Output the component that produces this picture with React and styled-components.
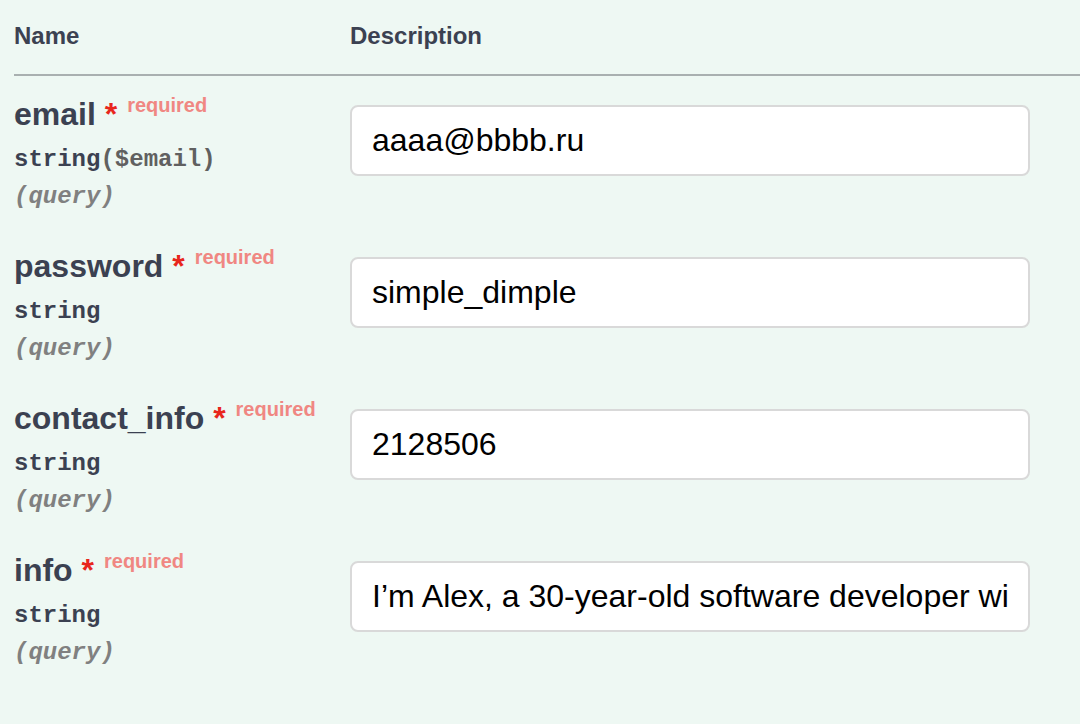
import React from 'react';
import styled, {createGlobalStyle} from 'styled-components';

const GlobalStyle = createGlobalStyle`
    html, body { margin:0; padding:0; background:#eef8f3; }
    body { font-family:"Liberation Sans", Arial, sans-serif; }
`;

const Page = styled.div`
    width:1080px;height:724px;overflow:hidden;background:#eef8f3;
    padding-left:14px;box-sizing:border-box;
`;

const Table = styled.div`
    display:grid;grid-template-columns:336px 1fr;
`;

const HeadCell = styled.div`
    font-size:24px;font-weight:700;color:#3b4151;
    padding:22px 0 24px;
    border-bottom:2px solid #a9b0b0;
`;

const NameCell = styled.div`
    padding:20px 0 18px;
`;

const DescCell = styled.div`
    padding:29px 0 0;
`;

const ParamName = styled.div`
    font-size:32px;font-weight:700;color:#3b4151;line-height:37px;
    white-space:nowrap;
    .star{color:#e8261c;}
    .req{
        font-size:20px;line-height:0;color:#f08782;position:relative;top:-13px;padding-left:10px;
    }
`;

const ParamType = styled.div`
    font-family:"Liberation Mono", "Courier New", monospace;
    font-size:24px;font-weight:700;color:#3b4151;padding:12px 0 9px;line-height:30px;
    .fmt{color:#606060;}
`;

const ParamIn = styled.div`
    font-family:"Liberation Mono", "Courier New", monospace;
    font-size:24px;font-weight:700;font-style:italic;color:#808080;line-height:26px;
`;

const Input = styled.input`
    box-sizing:border-box;width:680px;height:71px;
    border:2px solid #d9d9d9;border-radius:8px;background:#fff;
    padding:0 20px;font-family:"Liberation Sans", Arial, sans-serif;font-size:32px;color:#000;
    outline:none;
`;

const params = [
    {name:'email', type:'string', format:'($email)', value:'aaaa@bbbb.ru'},
    {name:'password', type:'string', value:'simple_dimple'},
    {name:'contact_info', type:'string', value:'2128506'},
    {name:'info', type:'string', value:'I’m Alex, a 30-year-old software developer with a passion for building things.'},
];

const App = () => (
    <Page>
        <GlobalStyle />
        <Table>
            <HeadCell>Name</HeadCell>
            <HeadCell>Description</HeadCell>
            {params.map((p) => (
                <React.Fragment key={p.name}>
                    <NameCell>
                        <ParamName>
                            {p.name}<span className="star">&nbsp;*</span><span className="req">required</span>
                        </ParamName>
                        <ParamType>
                            {p.type}{p.format && <span className="fmt">{p.format}</span>}
                        </ParamType>
                        <ParamIn>(query)</ParamIn>
                    </NameCell>
                    <DescCell>
                        <Input defaultValue={p.value} />
                    </DescCell>
                </React.Fragment>
            ))}
        </Table>
    </Page>
);

export default App;
